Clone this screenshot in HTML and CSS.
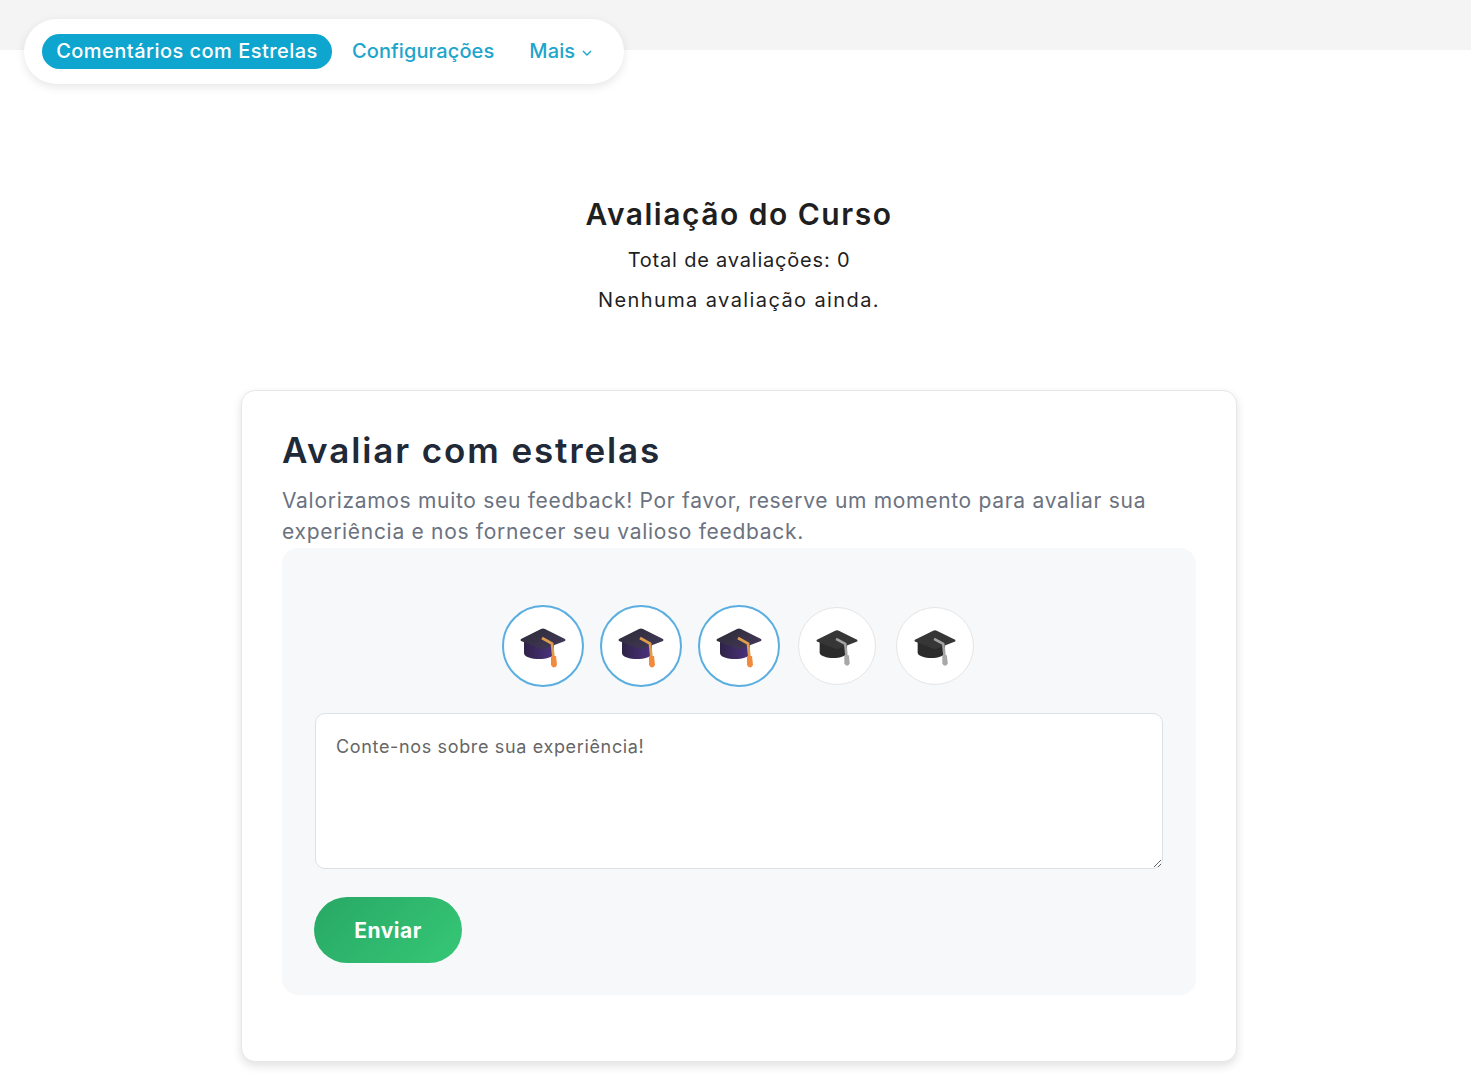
FILE: index.html
```html
<!DOCTYPE html>
<html lang="pt-BR">
<head>
    <meta charset="UTF-8">
    <meta name="viewport" content="width=device-width, initial-scale=1.0">
    <title>Avaliação do Curso</title>
    <link rel="stylesheet" href="styles.css">
</head>
<body>
    <svg class="defs" width="0" height="0" aria-hidden="true">
        <defs>
            <linearGradient id="board" x1="0" y1="0" x2="1" y2="1">
                <stop offset="0" stop-color="#2c2a35"/>
                <stop offset="1" stop-color="#453a5c"/>
            </linearGradient>
            <linearGradient id="skull" x1="0" y1="0" x2="1" y2="0">
                <stop offset="0" stop-color="#2f2347"/>
                <stop offset="1" stop-color="#4b3280"/>
            </linearGradient>
            <symbol id="cap" viewBox="0 0 46 40">
                <path d="M4 13V25C4 29 12 31 19 31C26 31 34 29 34 25V13Z" fill="url(#skull)"/>
                <path d="M21 1Q23 0 25 1L45 11Q46 12 45 13L24 21Q23 21.500 22 21L1 13Q0 12 1 11Z" fill="url(#board)"/>
                <path d="M22 10L32 15.500L33.500 30" fill="none" stroke="#dd9c4e" stroke-width="2.800"/>
                <path d="M31 28H36L37 37Q34 42 31 37Z" fill="#f28a3c"/>
            </symbol>
            <symbol id="cap-off" viewBox="0 0 46 40">
                <path d="M4 13V25C4 29 12 31 19 31C26 31 34 29 34 25V13Z" fill="#2b2b2b"/>
                <path d="M21 1Q23 0 25 1L45 11Q46 12 45 13L24 21Q23 21.500 22 21L1 13Q0 12 1 11Z" fill="#363636"/>
                <path d="M22 10L32 15.500L33.500 30" fill="none" stroke="#a3a3a3" stroke-width="2.800"/>
                <path d="M31 28H36L37 37Q34 42 31 37Z" fill="#a8a8a8"/>
            </symbol>
        </defs>
    </svg>

    <header class="top-band">
        <nav class="tabs">
            <a class="tab tab-active" href="#">Comentários com Estrelas</a>
            <a class="tab" href="#">Configurações</a>
            <a class="tab tab-more" href="#">Mais
                <svg class="chevron" viewBox="0 0 10 6" width="10" height="6"><path d="M1 1L5 5L9 1" fill="none" stroke="currentColor" stroke-width="1.400"/></svg>
            </a>
        </nav>
    </header>

    <main class="page">
        <section class="summary">
            <h1>Avaliação do Curso</h1>
            <p class="total">Total de avaliações: 0</p>
            <p class="empty">Nenhuma avaliação ainda.</p>
        </section>

        <section class="card">
            <h2>Avaliar com estrelas</h2>
            <p class="lead">Valorizamos muito seu feedback! Por favor, reserve um momento para avaliar sua experiência e nos fornecer seu valioso feedback.</p>
            <form class="panel">
                <div class="rating">
                    <span class="star star-on"><svg class="cap"><use href="#cap"/></svg></span>
                    <span class="star star-on"><svg class="cap"><use href="#cap"/></svg></span>
                    <span class="star star-on"><svg class="cap"><use href="#cap"/></svg></span>
                    <span class="star"><svg class="cap"><use href="#cap-off"/></svg></span>
                    <span class="star"><svg class="cap"><use href="#cap-off"/></svg></span>
                </div>
                <textarea class="comment" placeholder="Conte-nos sobre sua experiência!"></textarea>
                <button class="btn-send" type="button">Enviar</button>
            </form>
        </section>
    </main>
</body>
</html>
```

FILE: styles.css
```css
body {
    font-family: 'Inter', 'Open Sans', sans-serif;
    margin: 0;
    background: #fff;
    color: #1f1f1f;
}
.defs {
    display: block;
    height: 0;
}
.top-band {
    height: 50px;
    background: #f4f4f4;
    padding: 19px 0 0 24px;
    box-sizing: border-box;
}
.tabs {
    display: inline-flex;
    align-items: center;
    width: 600px;
    height: 65px;
    box-sizing: border-box;
    padding: 0 18px;
    background: #fff;
    border-radius: 33px;
    box-shadow: 0 3px 10px rgba(0,0,0,0.1);
}
.tab {
    display: block;
    color: #1ea5cc;
    font-size: 20px;
    font-weight: 500;
    line-height: 35px;
    letter-spacing: 0.1px;
    text-decoration: none;
    white-space: nowrap;
}
.tab-active {
    width: 290px;
    margin-right: 20px;
    text-align: center;
    background: #0ea5cf;
    color: #fff;
    border-radius: 18px;
    letter-spacing: 0.47px;
}
.tab-more {
    margin-left: 35px;
}
.chevron {
    margin: 0 0 2px 1px;
}
.page {
    padding: 144px 0 18px 7px;
}
.summary {
    text-align: center;
}
.summary h1 {
    margin: 0 0 6px;
    font-size: 30px;
    line-height: 40px;
    font-weight: 600;
    letter-spacing: 1.5px;
}
.summary p {
    margin: 0;
    font-size: 20px;
    line-height: 40px;
}
.total {
    letter-spacing: 0.8px;
}
.empty {
    letter-spacing: 1.4px;
}
.card {
    width: 996px;
    height: 672px;
    box-sizing: border-box;
    margin: 70px auto 0;
    padding: 37px 40px 0;
    background: #fff;
    border: 1px solid #e5e7eb;
    border-radius: 14px;
    box-shadow: 0 4px 10px rgba(0,0,0,0.12);
}
.card h2 {
    margin: 0 0 13px;
    font-size: 35px;
    line-height: 44px;
    font-weight: 600;
    letter-spacing: 1.9px;
    color: #1f2937;
}
.lead {
    margin: 0;
    font-size: 21px;
    line-height: 31px;
    letter-spacing: 0.7px;
    color: #6b7280;
}
.panel {
    height: 447px;
    box-sizing: border-box;
    margin-top: 1px;
    padding: 57px 33px 0;
    background: #f7f8fa;
    border-radius: 16px;
}
.rating {
    display: flex;
    justify-content: center;
    align-items: center;
    height: 82px;
}
.star {
    display: flex;
    align-items: center;
    justify-content: center;
    width: 76px;
    height: 76px;
    margin: 0 10px;
    background: #fff;
    border: 1px solid #e5e5e5;
    border-radius: 50%;
}
.star-on {
    width: 78px;
    height: 78px;
    margin: 0 8px;
    border: 2px solid #5aaee0;
}
.cap {
    display: block;
    width: 42px;
    height: 38px;
    margin-top: 4px;
}
.star-on .cap {
    width: 46px;
    height: 40px;
}
.comment {
    display: block;
    width: 848px;
    height: 156px;
    box-sizing: border-box;
    margin-top: 26px;
    padding: 22px 20px;
    background: #fff;
    border: 1px solid #dde1e6;
    border-radius: 10px;
    font-family: inherit;
    font-size: 18px;
    letter-spacing: 0.65px;
    outline: none;
}
.comment::placeholder {
    color: #666;
}
.btn-send {
    display: block;
    width: 148px;
    height: 66px;
    margin: 28px 0 0 -1px;
    border: none;
    border-radius: 33px;
    background: linear-gradient(135deg, #28a865, #36c776);
    color: #fff;
    font-family: inherit;
    font-size: 21px;
    font-weight: 700;
    letter-spacing: 0.5px;
    cursor: pointer;
}
```
